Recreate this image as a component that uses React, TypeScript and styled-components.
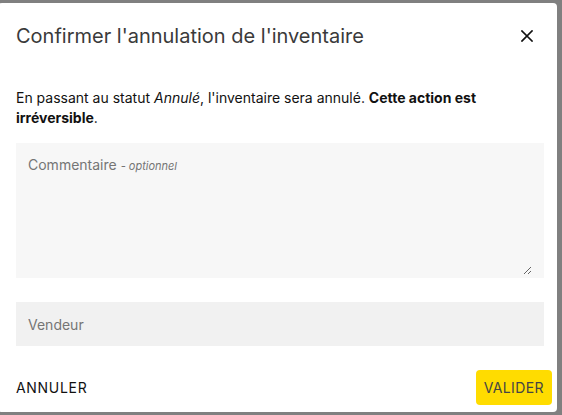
import React from 'react';
import styled, { createGlobalStyle } from 'styled-components';

const GlobalStyle = createGlobalStyle`
  html, body {
    margin: 0;
    padding: 0;
    background: #808080;
    font-family: Inter, 'Noto Sans', 'Liberation Sans', sans-serif;
  }
`;

const Backdrop = styled.div`
  width: 562px;
  height: 415px;
  padding-top: 3px;
  box-sizing: border-box;
  overflow: hidden;
  background: #808080;
`;

const Dialog = styled.div`
  margin-left: -2px;
  width: 559px;
  height: 409px;
  box-sizing: border-box;
  background: #ffffff;
  border-radius: 4px;
  padding: 21px 13px 7px 18px;
  display: flex;
  flex-direction: column;
`;

const Header = styled.div`
  display: flex;
  align-items: center;
  justify-content: space-between;
  height: 24px;
`;

const Title = styled.h2`
  margin: 0;
  font-size: 20px;
  line-height: 24px;
  font-weight: 400;
  color: #3a3a3a;
`;

const CloseButton = styled.button`
  border: none;
  background: none;
  padding: 0;
  margin-right: 9px;
  width: 16px;
  height: 16px;
  display: flex;
  align-items: center;
  justify-content: center;
  cursor: pointer;
`;

const Message = styled.p`
  margin: 40px 0 0;
  font-size: 14px;
  line-height: 20px;
  color: #111111;
  max-width: 500px;

  em {
    font-style: italic;
  }

  strong {
    font-weight: 700;
  }
`;

const FilledBox = styled.div`
  position: relative;
  margin-top: 15px;
  width: 528px;
  height: 135px;
  box-sizing: border-box;
  background: #f7f7f7;
  padding: 12px 12px 3px 12px;
`;

const CommentField = styled.textarea`
  display: block;
  margin: 0;
  width: 100%;
  height: 120px;
  box-sizing: border-box;
  border: none;
  outline: none;
  background: transparent;
  padding: 0;
  font-family: inherit;
  font-size: 14px;
  line-height: 20px;
  color: #222;
  resize: vertical;
`;

const Placeholder = styled.div`
  position: absolute;
  left: 12px;
  top: 12px;
  font-size: 14px;
  line-height: 20px;
  color: #757575;
  pointer-events: none;

  span {
    font-size: 11px;
    font-style: italic;
  }
`;

const TextInput = styled.input`
  display: block;
  margin-top: 24px;
  width: 528px;
  height: 44px;
  box-sizing: border-box;
  border: none;
  outline: none;
  background: #f1f1f1;
  padding: 0 12px;
  font-family: inherit;
  font-size: 14px;
  color: #222;

  &::placeholder {
    color: #757575;
  }
`;

const Footer = styled.div`
  margin-top: auto;
  display: flex;
  align-items: center;
  justify-content: space-between;
`;

const TextButton = styled.button`
  border: none;
  background: none;
  padding: 0;
  font-family: inherit;
  font-size: 14px;
  font-weight: 400;
  letter-spacing: 0.7px;
  color: #111111;
  cursor: pointer;
`;

const PrimaryButton = styled.button`
  border: none;
  background: #ffdc00;
  border-radius: 4px;
  height: 35px;
  padding: 0 8px;
  margin-right: -8px;
  font-family: inherit;
  font-size: 14px;
  font-weight: 400;
  letter-spacing: 0.4px;
  color: #454545;
  cursor: pointer;
`;

export default function App() {
  return (
    <>
      <GlobalStyle />
      <Backdrop>
        <Dialog>
          <Header>
            <Title>Confirmer l'annulation de l'inventaire</Title>
            <CloseButton aria-label="Fermer">
              <svg width="12" height="12" viewBox="0 0 12 12">
                <path d="M1 1 L11 11 M11 1 L1 11" stroke="#111" strokeWidth="1.7" strokeLinecap="square" />
              </svg>
            </CloseButton>
          </Header>
          <Message>
            En passant au statut <em>Annulé</em>, l'inventaire sera annulé.{' '}
            <strong>Cette action est irréversible</strong>.
          </Message>
          <FilledBox>
            <CommentField />
            <Placeholder>
              Commentaire <span>- optionnel</span>
            </Placeholder>
          </FilledBox>
          <TextInput placeholder="Vendeur" />
          <Footer>
            <TextButton>ANNULER</TextButton>
            <PrimaryButton>VALIDER</PrimaryButton>
          </Footer>
        </Dialog>
      </Backdrop>
    </>
  );
}
